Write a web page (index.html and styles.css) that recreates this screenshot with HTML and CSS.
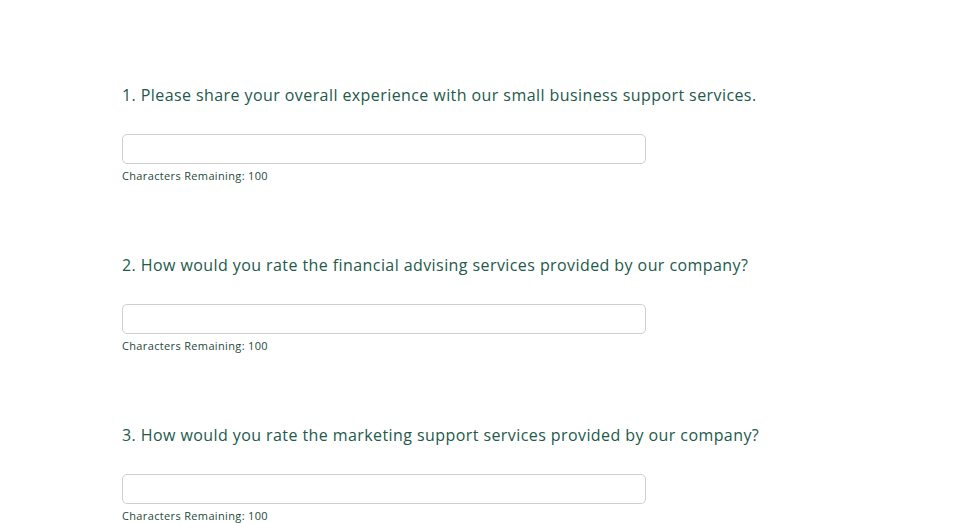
FILE: index.html
```html
<!DOCTYPE html>
<html>
<head>
<meta charset="utf-8">
<link rel="stylesheet" href="styles.css">
</head>
<body>
<div class="survey">
  <div class="question">
    <label class="q-label">1. Please share your overall experience with our small business support services.</label>
    <input class="q-input" type="text">
    <div class="q-remaining">Characters Remaining: 100</div>
  </div>
  <div class="question">
    <label class="q-label">2. How would you rate the financial advising services provided by our company?</label>
    <input class="q-input" type="text">
    <div class="q-remaining">Characters Remaining: 100</div>
  </div>
  <div class="question">
    <label class="q-label">3. How would you rate the marketing support services provided by our company?</label>
    <input class="q-input" type="text">
    <div class="q-remaining">Characters Remaining: 100</div>
  </div>
</div>
</body>
</html>
```
FILE: styles.css
```css
html, body {
  margin: 0;
  padding: 0;
  background: #ffffff;
}
body {
  font-family: "Open Sans", "DejaVu Sans", sans-serif;
  color: #1f5a45;
}
.survey {
  padding: 84px 0 0 122px;
  display: flex;
  flex-direction: column;
  gap: 71px;
}
.question {
  display: flex;
  flex-direction: column;
}
.q-label {
  display: block;
  font-size: 16px;
  line-height: 22px;
  letter-spacing: 0.42px;
  color: #23594a;
  margin-bottom: 28px;
}
.q-input {
  box-sizing: border-box;
  width: 524px;
  height: 30px;
  border: 1px solid #cfcfcf;
  border-radius: 5px;
  margin: 0;
  padding: 0 8px;
  background: #fff;
}
.q-remaining {
  font-size: 11px;
  line-height: 14px;
  letter-spacing: 0.35px;
  margin-top: 5px;
  color: #1e4a3a;
}
```
